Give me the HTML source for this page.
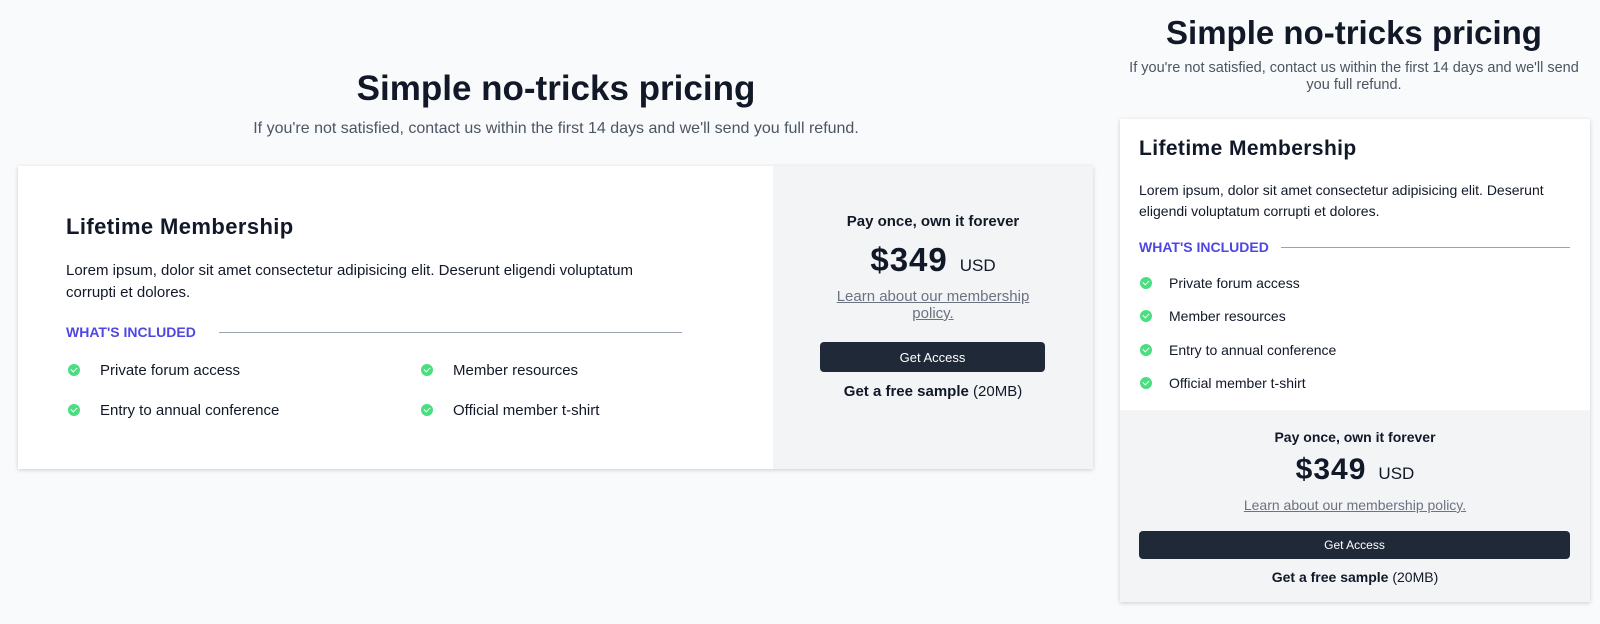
<!DOCTYPE html>
<html><head><style>
*{margin:0;padding:0;box-sizing:border-box}
body{width:1600px;height:624px;background:#f9fafb;font-family:"Liberation Sans",Arial,sans-serif;color:#111827;position:relative;overflow:hidden}
.a{position:absolute;white-space:nowrap}
h1{font-size:35px;font-weight:bold;color:#111827;letter-spacing:0}
.sub{font-size:16px;color:#4b5563}
.card{position:absolute;background:#fff;box-shadow:0 1px 4px rgba(0,0,0,.18)}
.gray{position:absolute;background:#f3f4f6}
.t{font-size:22px;font-weight:bold;color:#111827;letter-spacing:0.4px}
.p{font-size:15px;color:#111827;line-height:22px;white-space:normal}
.inc{font-size:14px;font-weight:bold;color:#4f46e5}
.ln{position:absolute;height:1px;background:#9ca3af}
.it{font-size:15px;color:#111827}
.ck{position:absolute;width:12px;height:12px;border-radius:50%;background:#4ade80}
.ck:after{content:"";position:absolute;left:3px;top:2.5px;width:5px;height:3px;border-left:1.6px solid #fff;border-bottom:1.6px solid #fff;transform:rotate(-45deg)}
.c{text-align:center;transform:translateX(-50%)}
.pay{font-size:15px;font-weight:bold}
.price{font-size:33px;font-weight:bold;letter-spacing:1px}
.usd{font-size:17px;color:#111827;font-weight:normal;margin-left:12px;letter-spacing:0}
.lk{font-size:15px;color:#6b7280;text-decoration:underline;line-height:17px}
.btn{position:absolute;background:#1f2937;color:#fff;border-radius:4px;font-size:13px;display:flex;align-items:center;justify-content:center}
.smp{font-size:15px;color:#111827}
</style></head><body>
<h1 class="a c" style="left:556px;top:69px">Simple no-tricks pricing</h1>
<div class="a c sub" style="left:556px;top:120px">If you're not satisfied, contact us within the first 14 days and we'll send you full refund.</div>

<div class="card" style="left:18px;top:166px;width:1075px;height:303px"></div>
<div class="gray" style="left:773px;top:166px;width:320px;height:303px"></div>
<div class="a t" style="left:66px;top:214px">Lifetime Membership</div>
<div class="a p" style="left:66px;top:260px;width:615px">Lorem ipsum, dolor sit amet consectetur adipisicing elit. Deserunt eligendi voluptatum corrupti et dolores.</div>
<div class="a inc" style="left:66px;top:324px">WHAT'S INCLUDED</div>
<div class="ln" style="left:219px;top:332px;width:463px"></div>
<div class="ck" style="left:68px;top:364px"></div><div class="a it" style="left:100px;top:362px">Private forum access</div>
<div class="ck" style="left:421px;top:364px"></div><div class="a it" style="left:453px;top:362px">Member resources</div>
<div class="ck" style="left:68px;top:404px"></div><div class="a it" style="left:100px;top:402px">Entry to annual conference</div>
<div class="ck" style="left:421px;top:404px"></div><div class="a it" style="left:453px;top:402px">Official member t-shirt</div>
<div class="a c pay" style="left:933px;top:213px">Pay once, own it forever</div>
<div class="a c price" style="left:933px;top:241px">$349<span class="usd">USD</span></div>
<div class="a c lk" style="left:933px;top:288px;text-align:center">Learn about our membership<br>policy.</div>
<div class="btn" style="left:820px;top:342px;width:225px;height:30px">Get Access</div>
<div class="a c smp" style="left:933px;top:383px"><b>Get a free sample</b> (20MB)</div>

<h1 class="a c" style="left:1354px;top:14px;font-size:33px">Simple no-tricks pricing</h1>
<div class="a c sub" style="left:1354px;top:60px;text-align:center;font-size:14.5px;line-height:17px">If you're not satisfied, contact us within the first 14 days and we'll send<br>you full refund.</div>
<div class="card" style="left:1120px;top:119px;width:470px;height:483px"></div>
<div class="gray" style="left:1120px;top:410px;width:470px;height:192px"></div>
<div class="a t" style="left:1139px;top:137px;font-size:21px">Lifetime Membership</div>
<div class="a p" style="left:1139px;top:180px;width:440px;font-size:14px;line-height:21px">Lorem ipsum, dolor sit amet consectetur adipisicing elit. Deserunt eligendi voluptatum corrupti et dolores.</div>
<div class="a inc" style="left:1139px;top:239px;font-size:14px">WHAT'S INCLUDED</div>
<div class="ln" style="left:1281px;top:247px;width:289px"></div>
<div class="ck" style="left:1140px;top:277px"></div><div class="a it" style="left:1169px;top:275px;font-size:14px">Private forum access</div>
<div class="ck" style="left:1140px;top:310px"></div><div class="a it" style="left:1169px;top:308px;font-size:14px">Member resources</div>
<div class="ck" style="left:1140px;top:344px"></div><div class="a it" style="left:1169px;top:342px;font-size:14px">Entry to annual conference</div>
<div class="ck" style="left:1140px;top:377px"></div><div class="a it" style="left:1169px;top:375px;font-size:14px">Official member t-shirt</div>
<div class="a c pay" style="left:1355px;top:429px;font-size:14px">Pay once, own it forever</div>
<div class="a c price" style="left:1355px;top:453px;font-size:30px">$349<span class="usd">USD</span></div>
<div class="a c lk" style="left:1355px;top:497px;font-size:14px">Learn about our membership policy.</div>
<div class="btn" style="left:1139px;top:531px;width:431px;height:28px;font-size:12px">Get Access</div>
<div class="a c smp" style="left:1355px;top:569px;font-size:14px"><b>Get a free sample</b> (20MB)</div>
</body></html>
